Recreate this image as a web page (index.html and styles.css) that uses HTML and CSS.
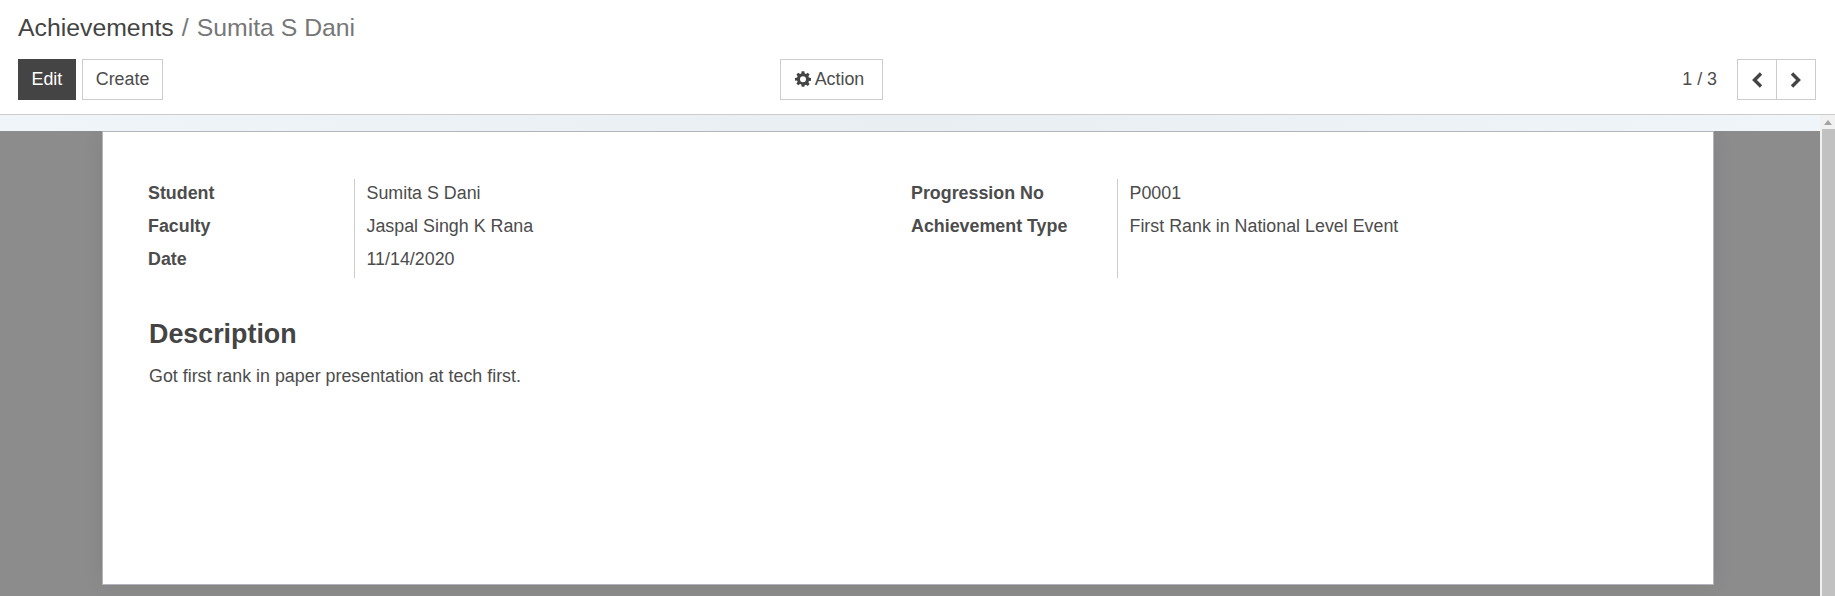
FILE: index.html
```html
<!DOCTYPE html>
<html lang="en">

<head>
    <meta charset="UTF-8">
    <title>Achievements - Sumita S Dani</title>
    <link rel="stylesheet" href="styles.css">
</head>

<body>
    <!-- Control panel -->
    <div class="control-panel">
        <ol class="breadcrumb">
            <li class="crumb">Achievements</li>
            <li class="crumb-sep">/</li>
            <li class="crumb-active">Sumita S Dani</li>
        </ol>
        <div class="toolbar">
            <div class="toolbar-left">
                <button class="btn btn-dark">Edit</button>
                <button class="btn">Create</button>
            </div>
            <div class="toolbar-center">
                <button class="btn btn-action">
                    <svg class="gear" viewBox="0 0 24 24" width="16" height="16">
                        <path fill="#444" fill-rule="evenodd" d="M10 1h4l.6 3.100 1.900.8 2.600-1.800 2.800 2.800-1.800 2.600.8 1.900L24 11v4l-3.100.6-.8 1.900 1.800 2.600-2.800 2.800-2.600-1.800-1.900.8L14 24h-4l-.6-3.100-1.900-.8-2.600 1.800-2.800-2.800 1.800-2.600-.8-1.900L0 15v-4l3.100-.6.8-1.900-1.800-2.600 2.800-2.800 2.600 1.800 1.900-.8zM12 8.500a4.500 4.500 0 1 0 0 9 4.500 4.500 0 0 0 0-9z" transform="translate(0 -.5)"/>
                    </svg>
                    Action
                </button>
            </div>
            <div class="toolbar-right">
                <span class="pager-value">1 / 3</span>
                <div class="pager-buttons">
                    <button class="btn btn-pager">
                        <svg viewBox="0 0 12 16" width="12" height="16">
                            <path d="M10 1.500 3.500 8l6.500 6.500" fill="none" stroke="#444" stroke-width="3.400"/>
                        </svg>
                    </button>
                    <button class="btn btn-pager btn-next">
                        <svg viewBox="0 0 12 16" width="12" height="16">
                            <path d="M2 1.500 8.500 8 2 14.500" fill="none" stroke="#444" stroke-width="3.400"/>
                        </svg>
                    </button>
                </div>
            </div>
        </div>
    </div>

    <!-- Form view -->
    <div class="content">
        <div class="statusbar"></div>
        <div class="form-area">
            <div class="sheet">
                <div class="groups">
                    <div class="group">
                        <div class="labels">
                            <div class="label">Student</div>
                            <div class="label">Faculty</div>
                            <div class="label">Date</div>
                        </div>
                        <div class="values">
                            <div class="value">Sumita S Dani</div>
                            <div class="value">Jaspal Singh K Rana</div>
                            <div class="value">11/14/2020</div>
                        </div>
                    </div>
                    <div class="group">
                        <div class="labels">
                            <div class="label">Progression No</div>
                            <div class="label">Achievement Type</div>
                        </div>
                        <div class="values">
                            <div class="value">P0001</div>
                            <div class="value">First Rank in National Level Event</div>
                        </div>
                    </div>
                </div>
                <h2 class="section-title">Description</h2>
                <p class="section-text">Got first rank in paper presentation at tech first.</p>
            </div>
        </div>
        <div class="scrollbar">
            <div class="scroll-arrow"></div>
            <div class="scroll-thumb"></div>
        </div>
    </div>
</body>

</html>
```

FILE: styles.css
```css
html,
body {
    height: 100%;
}

body {
    font-family: "Liberation Sans", Arial, sans-serif;
    font-size: 17.85px;
    margin: 0;
    color: #4c4c4c;
    background-color: #fff;
    overflow: hidden;
    display: flex;
    flex-direction: column;
}

/* Control panel */
.control-panel {
    height: 114px;
    padding: 0 19px 0 18px;
    border-bottom: 1px solid #ccc;
    flex-shrink: 0;
}

.breadcrumb {
    display: flex;
    gap: 8px;
    list-style: none;
    margin: 0;
    padding: 12px 0 0;
    height: 59px;
    box-sizing: border-box;
    font-size: 24.8px;
    line-height: 32px;
}

.crumb {
    color: #444;
}

.crumb-sep,
.crumb-active {
    color: #777;
}

.toolbar {
    display: grid;
    grid-template-columns: 762px auto 1fr;
    align-items: center;
}

.toolbar-left {
    display: flex;
    gap: 6px;
}

.toolbar-right {
    display: flex;
    justify-content: flex-end;
    align-items: center;
    gap: 20px;
}

.btn {
    height: 41px;
    padding: 0 13px;
    border: 1px solid #ccc;
    background: #fff;
    color: #4c4c4c;
    font-family: inherit;
    font-size: 17.85px;
    cursor: pointer;
}

.btn-dark {
    padding: 0 12.5px;
    background: #444;
    border-color: #444;
    color: #fff;
}

.btn-action {
    display: block;
    width: 103px;
    padding: 0 4px 0 0;
}

.gear {
    vertical-align: -2px;
}

.pager-buttons {
    display: flex;
}

.btn-pager {
    width: 40px;
    padding: 0;
    display: flex;
    align-items: center;
    justify-content: center;
}

.btn-next {
    margin-left: -1px;
}

/* Form view */
.content {
    flex: 1;
    min-height: 0;
    display: grid;
    grid-template-columns: 1fr 15px;
    grid-template-rows: 16px 1fr;
}

.statusbar {
    background: linear-gradient(to right, #f0f5f9, #e9eef2 50%, #f0f5f9);
}

.form-area {
    grid-column: 1;
    grid-row: 2;
    background: #8c8c8c;
    padding: 0 106px 0 102px;
    overflow: hidden;
}

.sheet {
    height: 454px;
    background: #fff;
    box-sizing: border-box;
    padding: 47px 45px 0;
    border: 1px solid #b4b4bc;
    box-shadow: 0 0 20px rgba(0, 0, 0, 0.08);
}

.groups {
    display: flex;
}

.group {
    flex: 0 0 763px;
    display: flex;
}

.labels {
    width: 207px;
    font-weight: bold;
    border-right: 1px solid #ccc;
}

.values {
    padding-left: 11.5px;
}

.label,
.value {
    height: 33px;
    line-height: 28px;
    white-space: nowrap;
}

.labels,
.values {
    min-height: 99px;
    box-sizing: border-box;
}

.section-title {
    font-size: 26.85px;
    line-height: 32px;
    margin: 40px 0 0 1px;
    color: #444;
}

.section-text {
    margin: 12px 0 0 1px;
    line-height: 28px;
}

.scrollbar {
    grid-column: 2;
    grid-row: 1 / 3;
    background: #f1f1f1;
    display: flex;
    flex-direction: column;
}

.scroll-arrow {
    width: 0;
    height: 0;
    margin: 5px auto 4px;
    border-left: 4px solid transparent;
    border-right: 4px solid transparent;
    border-bottom: 5px solid #a3a3a3;
}

.scroll-thumb {
    flex: 1;
    margin-left: 2px;
    background: #c1c1c1;
}
```
